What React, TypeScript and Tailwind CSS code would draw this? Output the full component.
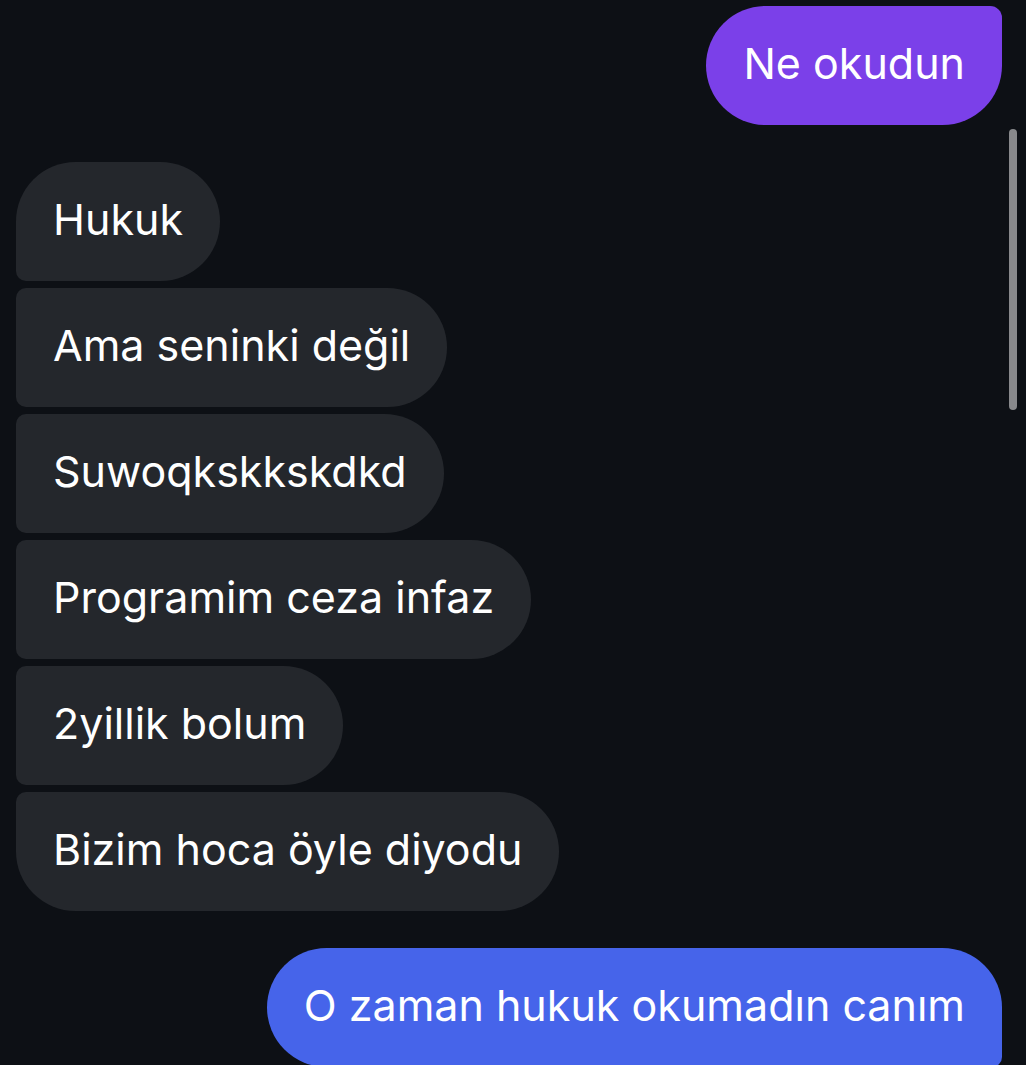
import React from "react";

// ─── Types ────────────────────────────────────────────────────────────────────
interface Message {
  id: number;
  text: string;
  fromMe: boolean;
  tone?: "purple" | "blue";
  corners: string;
}

// ─── Conversation ─────────────────────────────────────────────────────────────
const MESSAGES: Message[] = [
  { id: 1, text: "Ne okudun", fromMe: true, tone: "purple", corners: "rounded-l-[60px] rounded-tr-[12px] rounded-br-[60px]" },
  { id: 2, text: "Hukuk", fromMe: false, corners: "rounded-r-[60px] rounded-tl-[60px] rounded-bl-[10px]" },
  { id: 3, text: "Ama seninki değil", fromMe: false, corners: "rounded-r-[60px] rounded-l-[10px]" },
  { id: 4, text: "Suwoqkskkskdkd", fromMe: false, corners: "rounded-r-[60px] rounded-l-[10px]" },
  { id: 5, text: "Programim ceza infaz", fromMe: false, corners: "rounded-r-[60px] rounded-l-[10px]" },
  { id: 6, text: "2yillik bolum", fromMe: false, corners: "rounded-r-[60px] rounded-l-[10px]" },
  { id: 7, text: "Bizim hoca öyle diyodu", fromMe: false, corners: "rounded-r-[60px] rounded-tl-[10px] rounded-bl-[60px]" },
  { id: 8, text: "O zaman hukuk okumadın canım", fromMe: true, tone: "blue", corners: "rounded-l-[60px] rounded-tr-[60px] rounded-br-[10px]" },
];

function Bubble({ m }: { m: Message }) {
  const color = m.fromMe
    ? m.tone === "purple"
      ? "bg-[#7b40e9]"
      : "bg-[#4664ea]"
    : "bg-[#24272c]";
  return (
    <div className={`flex ${m.fromMe ? "justify-end pr-6" : "justify-start pl-4"}`}>
      <div
        className={`h-[119px] flex items-center px-[37px] pb-[5px] text-white text-[43px] leading-none whitespace-nowrap ${color} ${m.corners}`}
      >
        {m.text}
      </div>
    </div>
  );
}

// ─── Page ─────────────────────────────────────────────────────────────────────
export default function App() {
  const sent1 = MESSAGES[0];
  const received = MESSAGES.slice(1, 7);
  const sent2 = MESSAGES[7];

  return (
    <div
      className="relative w-[1026px] h-[1065px] overflow-hidden bg-[#0d1015] pt-[6px]"
      style={{ fontFamily: "Inter, 'Noto Sans', sans-serif" }}
    >
      <Bubble m={sent1} />
      <div className="mt-[37px] flex flex-col gap-[7px]">
        {received.map((m) => (
          <Bubble key={m.id} m={m} />
        ))}
      </div>
      <div className="mt-[37px]">
        <Bubble m={sent2} />
      </div>

      {/* scroll indicator */}
      <div className="absolute left-[1009px] top-[129px] w-[8px] h-[281px] rounded-full bg-[#88898c]" />
    </div>
  );
}
